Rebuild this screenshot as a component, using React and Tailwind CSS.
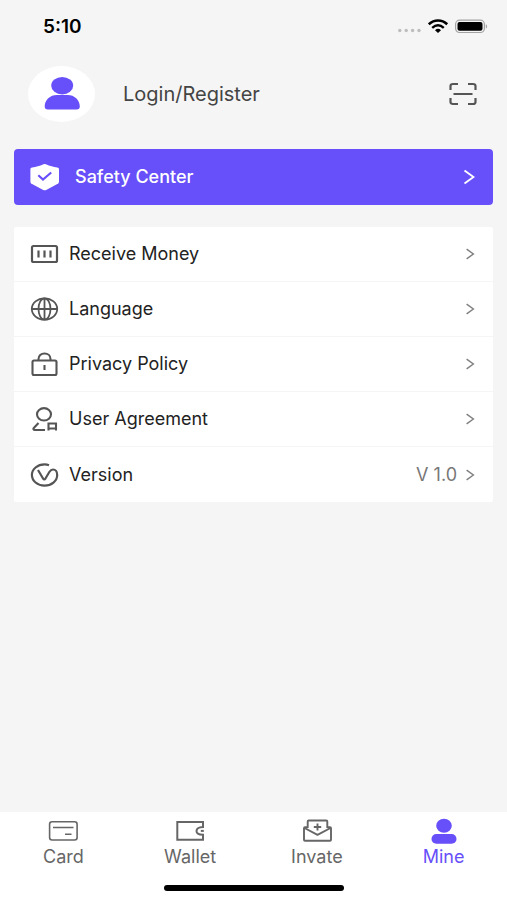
const menu = [
  { label: 'Receive Money', Icon: MoneyIcon },
  { label: 'Language', Icon: GlobeIcon },
  { label: 'Privacy Policy', Icon: LockIcon },
  { label: 'User Agreement', Icon: UserDocIcon },
  { label: 'Version', Icon: VersionIcon, value: 'V 1.0' },
]

const tabs = [
  { label: 'Card', Icon: CardIcon },
  { label: 'Wallet', Icon: WalletIcon },
  { label: 'Invate', Icon: InviteIcon },
  { label: 'Mine', Icon: MineIcon, active: true },
]

function LineIcon({ children, strokeWidth = 2 }) {
  return (
    <svg
      className="h-7 w-8 shrink-0"
      viewBox="0 0 32 28"
      fill="none"
      stroke="currentColor"
      strokeWidth={strokeWidth}
      strokeLinejoin="round"
      aria-hidden="true"
    >
      {children}
    </svg>
  )
}

function MoneyIcon() {
  return (
    <LineIcon strokeWidth={2.2}>
      <rect x="3" y="6" width="25" height="16" rx="1.5" />
      <path d="M9.500 10.500v7M15.500 10.500v7M21.500 10.500v7" />
    </LineIcon>
  )
}

function GlobeIcon() {
  return (
    <LineIcon strokeWidth={1.8}>
      <ellipse cx="15.500" cy="14" rx="12.700" ry="10.700" />
      <ellipse cx="15.500" cy="14" rx="6" ry="10.700" />
      <path d="M3 14h25M15.500 3.500v21" />
    </LineIcon>
  )
}

function LockIcon() {
  return (
    <LineIcon strokeWidth={2.1}>
      <rect x="3.500" y="10.500" width="24" height="14.500" rx="1.500" />
      <path d="M9.500 10.500V9c0-3.200 2.500-5.500 6-5.500s6 2.300 6 5.500v1.500M15.500 15v5" />
    </LineIcon>
  )
}

function UserDocIcon() {
  return (
    <LineIcon strokeWidth={2.1}>
      <ellipse cx="15" cy="9.300" rx="7" ry="6.200" />
      <path d="M16 25H6c-1.700 0-2-1-1.200-2l4.700-5" />
      <path d="M19.500 25.500V18.500h7.500v7M19.500 23.500h7.500" strokeLinejoin="miter" />
    </LineIcon>
  )
}

function VersionIcon() {
  return (
    <LineIcon strokeWidth={2.2}>
      <path d="M20 4.200C18.500 3.600 17 3.400 15.500 3.400 8.500 3.400 2.900 8.200 2.900 14S8.500 24.600 15.500 24.600 28.200 20 28.200 14c0-3.600-1.700-5.500-4.200-5.500-1.500 0-2.600.8-3.500 2.300l-4.200 7c-.5.900-1.600.9-2.100 0L9 9" />
    </LineIcon>
  )
}

function CardIcon() {
  return (
    <LineIcon strokeWidth={1.6}>
      <rect x="2.600" y="4.800" width="27.500" height="18.200" rx="2.500" />
      <path d="M6 10.500h20.500M18 17.300h6.500" />
    </LineIcon>
  )
}

function WalletIcon() {
  return (
    <LineIcon>
      <path
        d="M29 10V5H3.300v17.800H29v-5c-4-.2-6.500-1.700-6.500-3.900S25 10.200 29 10z"
        strokeLinejoin="miter"
      />
      <path d="M26.800 13.900h3" />
    </LineIcon>
  )
}

function InviteIcon() {
  return (
    <LineIcon strokeWidth={1.900}>
      <path d="M6.700 11V4.500q0-1 1-1h17.600q1 0 1 1V11" />
      <path d="M6.700 10.300H4q-1 0-1 1v11.500q0 1 1 1h25q1 0 1-1V11.300q0-1-1-1h-2.700" />
      <path d="M3.500 11l13 6.900L29.500 11M16.500 6.500v7M12.800 10h7.400" />
    </LineIcon>
  )
}

function MineIcon() {
  return (
    <svg className="h-7 w-8" viewBox="0 0 32 28" fill="currentColor" aria-hidden="true">
      <ellipse cx="16" cy="8.700" rx="7.800" ry="7" />
      <rect x="3.500" y="17" width="25" height="9.800" rx="4.900" />
    </svg>
  )
}

function Chevron({ className }) {
  return (
    <svg
      className={className}
      viewBox="0 0 12 16"
      fill="none"
      stroke="currentColor"
      strokeWidth="1.900"
      aria-hidden="true"
    >
      <path d="M1.500 1.500L10.500 8l-9 6.500" />
    </svg>
  )
}

function StatusBar() {
  return (
    <div className="flex h-[54px] items-center justify-between pr-[19px] pl-[43px]">
      <span className="text-[19px] leading-6 font-semibold text-black">5:10</span>
      <div className="flex items-center">
        <svg className="h-5 w-6" viewBox="0 0 24 20" fill="#bdbdbd" aria-hidden="true">
          <circle cx="1.800" cy="13.500" r="1.700" />
          <circle cx="8.200" cy="13.500" r="1.700" />
          <circle cx="14.600" cy="13.500" r="1.700" />
          <circle cx="21" cy="13.500" r="1.700" />
        </svg>
        <svg className="ml-1.5 h-5 w-6" viewBox="0 0 24 20" fill="none" stroke="#000" aria-hidden="true">
          <path d="M.8 7.300c5.500-5 13-5 18.400 0" strokeWidth="2.600" />
          <path d="M4.200 10.800c3.800-3.400 7.800-3.400 11.600 0" strokeWidth="2.400" />
          <path d="M7 13.200c2-1.800 4-1.800 6 0L10 16z" fill="#000" stroke="none" />
        </svg>
        <svg className="ml-0.5 h-5 w-[34px]" viewBox="0 0 34 20" fill="none" aria-hidden="true">
          <rect x="1.600" y="3.200" width="28.800" height="12.300" rx="4" stroke="#a3a3a3" strokeWidth="1.200" />
          <rect x="3.500" y="5" width="25" height="8.800" rx="2" fill="#000" />
          <path d="M31.800 7.300c1.800.6 1.800 3.600 0 4.200z" fill="#a3a3a3" />
        </svg>
      </div>
    </div>
  )
}

function Header() {
  return (
    <header className="flex h-20 items-center pr-[30px] pl-7">
      <div className="flex h-14 w-[67px] items-center justify-center rounded-[50%] bg-white">
        <svg className="h-9 w-9" viewBox="0 0 36 36" fill="#674ff9" aria-hidden="true">
          <ellipse cx="18.200" cy="9.700" rx="11" ry="8.700" />
          <path d="M13 19h10.500c7 0 12.300 4.900 12.300 11.500 0 2-1 3-3.300 3H4c-2.300 0-3.300-1-3.300-3C.7 23.900 6 19 13 19z" />
        </svg>
      </div>
      <a href="#login" className="ml-7 text-xl leading-6 text-[#444]">
        Login/Register
      </a>
      <button type="button" aria-label="Scan" className="ml-auto text-[#555]">
        <svg
          className="h-6 w-7"
          viewBox="0 0 28 24"
          fill="none"
          stroke="currentColor"
          strokeWidth="2.200"
          aria-hidden="true"
        >
          <path d="M1.500 8V4q0-2 2.500-2h5M19 2h5q2.500 0 2.500 2v4M26.500 16v4q0 2-2.500 2h-5M9 22H4q-2.500 0-2.500-2v-4M4.500 12h19" />
        </svg>
      </button>
    </header>
  )
}

function SafetyCenter() {
  return (
    <button
      type="button"
      className="mt-[15px] flex h-14 w-full items-center rounded bg-[#674ff9] pr-[18px] pl-[15px] text-white"
    >
      <svg className="h-7 w-8" viewBox="0 0 32 28" aria-hidden="true">
        <path
          d="M14.500 1.300q1.200-.5 2.400 0c4 1.700 7.500 2.700 11.300 3.300 1.300.2 1.800.8 1.800 1.800v12c0 1.300-.5 2-1.700 2.700L17.200 26.900q-1.500.8-3 0L3.100 21.100c-1.200-.7-1.700-1.400-1.700-2.700v-12c0-1 .5-1.600 1.800-1.800C7 4 10.500 3 14.500 1.300z"
          fill="#fff"
        />
        <path d="M9.300 12.300l4.700 4.200L22.200 9.500" fill="none" stroke="#674ff9" strokeWidth="2.200" />
      </svg>
      <span className="ml-3.5 text-lg leading-6 font-medium">Safety Center</span>
      <Chevron className="ml-auto h-4 w-3" />
    </button>
  )
}

function MenuList() {
  return (
    <ul className="mt-[22px] divide-y divide-[#f5f5f5] overflow-hidden rounded-xs bg-white">
      {menu.map(({ label, Icon, value }) => (
        <li key={label} className="h-[55px]">
          <button
            type="button"
            className="flex h-full w-full items-center pr-[18px] pl-[15px] text-[#555]"
          >
            <Icon />
            <span className="ml-2 text-lg leading-6 text-[#222]">{label}</span>
            <span className="ml-auto text-lg leading-6 text-[#777]">{value}</span>
            <Chevron className="ml-2 h-3 w-2.5 text-[#808080]" />
          </button>
        </li>
      ))}
    </ul>
  )
}

function TabBar() {
  return (
    <footer className="bg-white">
      <nav className="grid h-[68px] grid-cols-4 pt-[5px]">
        {tabs.map(({ label, Icon, active }) => (
          <a
            key={label}
            href={'#' + label.toLowerCase()}
            aria-current={active ? 'page' : undefined}
            className={
              active
                ? 'flex flex-col items-center text-[#674ff9]'
                : 'flex flex-col items-center text-[#666]'
            }
          >
            <Icon />
            <span className="text-lg leading-6">{label}</span>
          </a>
        ))}
      </nav>
      <div className="flex h-5 items-start justify-center pt-[5px]">
        <div className="h-1.5 w-[180px] rounded-full bg-black" />
      </div>
    </footer>
  )
}

export default function App() {
  return (
    <div className="flex min-h-screen flex-col bg-[#f5f5f5] font-[Inter,sans-serif]">
      <StatusBar />
      <Header />
      <main className="flex-1 px-3.5">
        <SafetyCenter />
        <MenuList />
      </main>
      <TabBar />
    </div>
  )
}
